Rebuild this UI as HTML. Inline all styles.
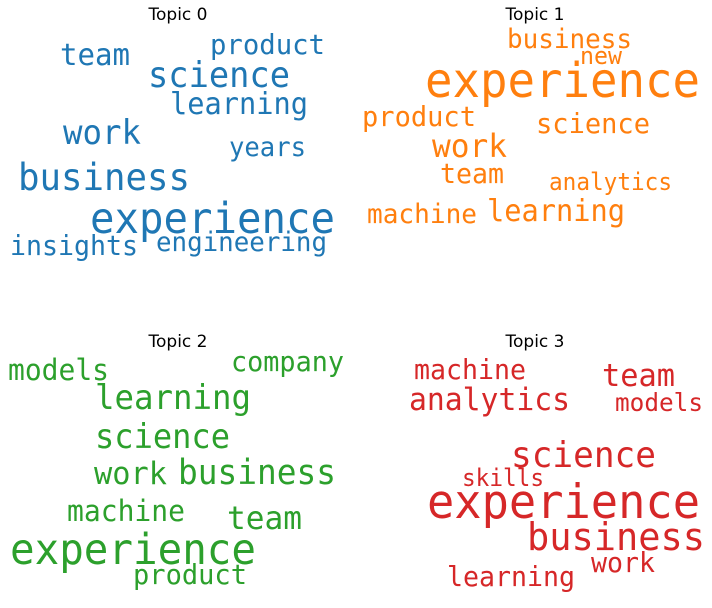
<!DOCTYPE html>
<html><head><meta charset="utf-8"><style>
html,body{margin:0;padding:0;background:#fff;width:712px;height:608px;overflow:hidden}
svg{display:block}
text{font-family:"DejaVu Sans Mono","Liberation Mono",monospace}
.t{font-family:"DejaVu Sans","Liberation Sans",sans-serif;font-size:17px;fill:#000;text-anchor:middle}
.b{fill:#1f77b4}.o{fill:#ff7f0e}.g{fill:#2ca02c}.r{fill:#d62728}
</style></head><body>
<svg width="712" height="608" viewBox="0 0 712 608" xmlns="http://www.w3.org/2000/svg">
<text class="t" x="178" y="20">Topic 0</text>
<text class="t" x="535" y="20">Topic 1</text>
<text class="t" x="178" y="347">Topic 2</text>
<text class="t" x="535" y="347">Topic 3</text>

<g class="b">
<text x="60" y="65" font-size="30" textLength="70" lengthAdjust="spacingAndGlyphs">team</text>
<text x="210" y="54" font-size="28" textLength="115" lengthAdjust="spacingAndGlyphs">product</text>
<text x="148" y="87" font-size="35.5" textLength="142" lengthAdjust="spacingAndGlyphs">science</text>
<text x="170" y="114" font-size="30" textLength="138" lengthAdjust="spacingAndGlyphs">learning</text>
<text x="63" y="144" font-size="33.5" textLength="78" lengthAdjust="spacingAndGlyphs">work</text>
<text x="229" y="156" font-size="27" textLength="77" lengthAdjust="spacingAndGlyphs">years</text>
<text x="18" y="190" font-size="37.5" textLength="172" lengthAdjust="spacingAndGlyphs">business</text>
<text x="90" y="233" font-size="42.5" textLength="245" lengthAdjust="spacingAndGlyphs">experience</text>
<text x="10" y="255" font-size="28" textLength="128" lengthAdjust="spacingAndGlyphs">insights</text>
<text x="156" y="251" font-size="27" textLength="171" lengthAdjust="spacingAndGlyphs">engineering</text>
</g>

<g class="o">
<text x="507" y="48" font-size="27" textLength="125" lengthAdjust="spacingAndGlyphs">business</text>
<text x="580" y="64" font-size="24" textLength="42" lengthAdjust="spacingAndGlyphs">new</text>
<text x="425" y="97" font-size="48" textLength="275" lengthAdjust="spacingAndGlyphs">experience</text>
<text x="362" y="126" font-size="28" textLength="114" lengthAdjust="spacingAndGlyphs">product</text>
<text x="536" y="133" font-size="28" textLength="114" lengthAdjust="spacingAndGlyphs">science</text>
<text x="432" y="157" font-size="32" textLength="75" lengthAdjust="spacingAndGlyphs">work</text>
<text x="440" y="183" font-size="28" textLength="64" lengthAdjust="spacingAndGlyphs">team</text>
<text x="549" y="190" font-size="24" textLength="123" lengthAdjust="spacingAndGlyphs">analytics</text>
<text x="367" y="223" font-size="27" textLength="110" lengthAdjust="spacingAndGlyphs">machine</text>
<text x="487" y="221" font-size="30" textLength="138" lengthAdjust="spacingAndGlyphs">learning</text>
</g>

<g class="g">
<text x="231" y="371" font-size="28" textLength="113" lengthAdjust="spacingAndGlyphs">company</text>
<text x="8" y="380" font-size="29" textLength="101" lengthAdjust="spacingAndGlyphs">models</text>
<text x="95" y="409" font-size="33.5" textLength="156" lengthAdjust="spacingAndGlyphs">learning</text>
<text x="95" y="448" font-size="33.5" textLength="135" lengthAdjust="spacingAndGlyphs">science</text>
<text x="94" y="484" font-size="31" textLength="73" lengthAdjust="spacingAndGlyphs">work</text>
<text x="178" y="484" font-size="34.5" textLength="158" lengthAdjust="spacingAndGlyphs">business</text>
<text x="67" y="521" font-size="29" textLength="118" lengthAdjust="spacingAndGlyphs">machine</text>
<text x="227" y="529" font-size="32" textLength="75" lengthAdjust="spacingAndGlyphs">team</text>
<text x="10" y="564" font-size="42.5" textLength="246" lengthAdjust="spacingAndGlyphs">experience</text>
<text x="133" y="584" font-size="28" textLength="114" lengthAdjust="spacingAndGlyphs">product</text>
</g>

<g class="r">
<text x="414" y="379" font-size="28" textLength="112" lengthAdjust="spacingAndGlyphs">machine</text>
<text x="602" y="386" font-size="31" textLength="73" lengthAdjust="spacingAndGlyphs">team</text>
<text x="409" y="410" font-size="31.5" textLength="161" lengthAdjust="spacingAndGlyphs">analytics</text>
<text x="615" y="411" font-size="25" textLength="88" lengthAdjust="spacingAndGlyphs">models</text>
<text x="511" y="467" font-size="35.5" textLength="145" lengthAdjust="spacingAndGlyphs">science</text>
<text x="462" y="486" font-size="24" textLength="82" lengthAdjust="spacingAndGlyphs">skills</text>
<text x="427" y="518" font-size="47" textLength="273" lengthAdjust="spacingAndGlyphs">experience</text>
<text x="527" y="550" font-size="38.5" textLength="178" lengthAdjust="spacingAndGlyphs">business</text>
<text x="591" y="572" font-size="28" textLength="64" lengthAdjust="spacingAndGlyphs">work</text>
<text x="447" y="586" font-size="28" textLength="128" lengthAdjust="spacingAndGlyphs">learning</text>
</g>
</svg>
</body></html>
